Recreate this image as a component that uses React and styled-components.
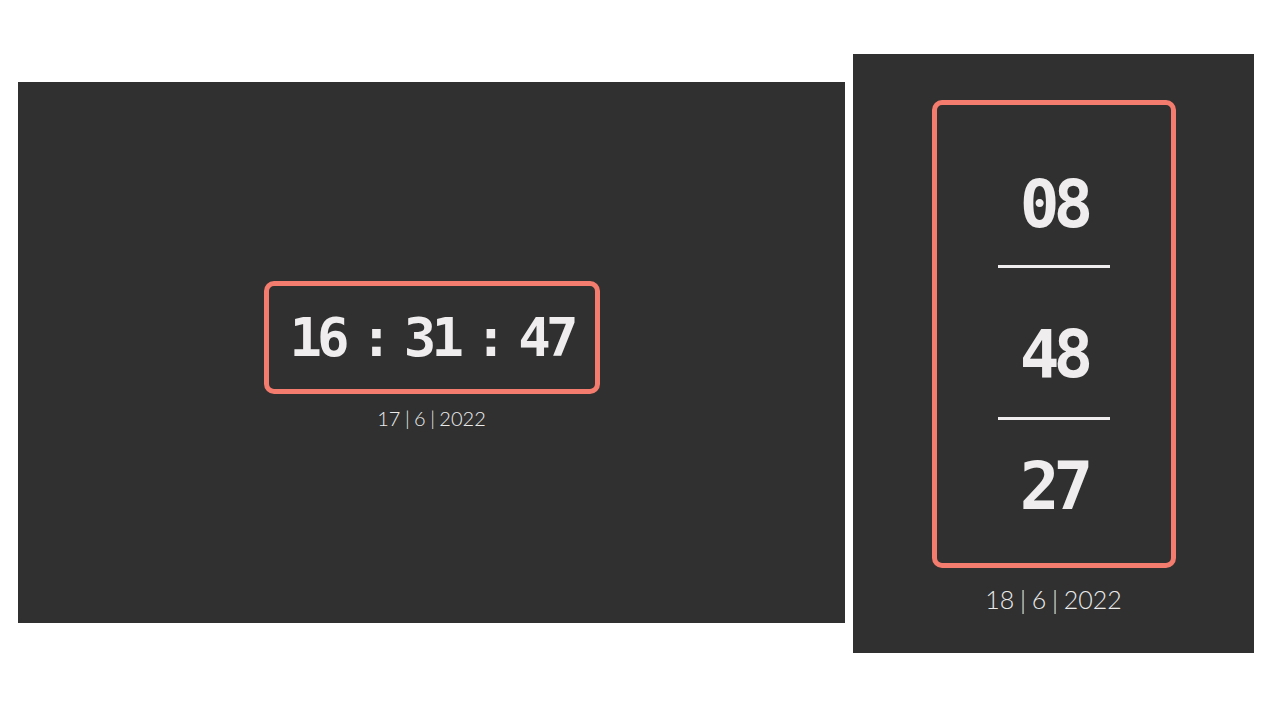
import styled, { createGlobalStyle } from "styled-components";

const GlobalStyle = createGlobalStyle`
    body {
        margin: 0;
        background: #ffffff;
        font-family: "Lato", "Liberation Sans", sans-serif;
    }
`;

const Page = styled.div`
    display: flex;
    flex-direction: row;
    align-items: flex-start;
    gap: 8px;
    padding: 54px 0 0 18px;
    width: 1280px;
    height: 720px;
    box-sizing: border-box;
`;

const Panel = styled.div`
    display: flex;
    flex-direction: column;
    align-items: center;
    justify-content: center;
    box-sizing: border-box;
    background: #303030;
    width: ${(p) => p.$w}px;
    height: ${(p) => p.$h}px;
    margin-top: ${(p) => p.$top || 0}px;
    padding-top: ${(p) => p.$shift || 0}px;
`;

const ClockBox = styled.div`
    display: flex;
    flex-direction: row;
    align-items: center;
    justify-content: center;
    gap: 16px;
    box-sizing: border-box;
    width: 336px;
    height: 113px;
    border: 5px solid #f47c6e;
    border-radius: 10px;
`;

const Digits = styled.span`
    font-family: "DejaVu Sans Mono", "Liberation Mono", monospace;
    font-weight: bold;
    font-size: ${(p) => p.$size}px;
    letter-spacing: -0.09em;
    line-height: 1;
    color: #efeded;
    margin-top: ${(p) => p.$mt || 0}px;
`;

const Colon = styled.span`
    font-family: "DejaVu Sans Mono", "Liberation Mono", monospace;
    font-weight: bold;
    font-size: 52px;
    line-height: 1;
    color: #efeded;
    letter-spacing: -0.08em;
`;

const StackBox = styled.div`
    display: flex;
    flex-direction: column;
    align-items: center;
    box-sizing: border-box;
    width: 244px;
    height: 468px;
    border: 5px solid #f47c6e;
    border-radius: 10px;
`;

const Divider = styled.div`
    width: 112px;
    height: 3px;
    background: #efeded;
    margin-top: ${(p) => p.$mt}px;
`;

const DateText = styled.div`
    font-family: "Lato", "Liberation Sans", sans-serif;
    font-weight: 300;
    font-size: ${(p) => p.$size}px;
    line-height: 1.2;
    word-spacing: -1px;
    color: #ebebeb;
    margin-top: ${(p) => p.$mt}px;
`;

function App() {
    return (
        <>
            <GlobalStyle />
            <Page>
                <Panel $w={827} $h={541} $top={28} $shift={6}>
                    <ClockBox>
                        <Digits $size={54}>16</Digits>
                        <Colon>:</Colon>
                        <Digits $size={54}>31</Digits>
                        <Colon>:</Colon>
                        <Digits $size={54}>47</Digits>
                    </ClockBox>
                    <DateText $size={20} $mt={12}>17 | 6 | 2022</DateText>
                </Panel>
                <Panel $w={401} $h={599} $shift={7}>
                    <StackBox>
                        <Digits $size={66} $mt={67}>08</Digits>
                        <Divider $mt={27} />
                        <Digits $size={66} $mt={54}>48</Digits>
                        <Divider $mt={29} />
                        <Digits $size={66} $mt={34}>27</Digits>
                    </StackBox>
                    <DateText $size={25} $mt={16}>18 | 6 | 2022</DateText>
                </Panel>
            </Page>
        </>
    );
}

export default App;
